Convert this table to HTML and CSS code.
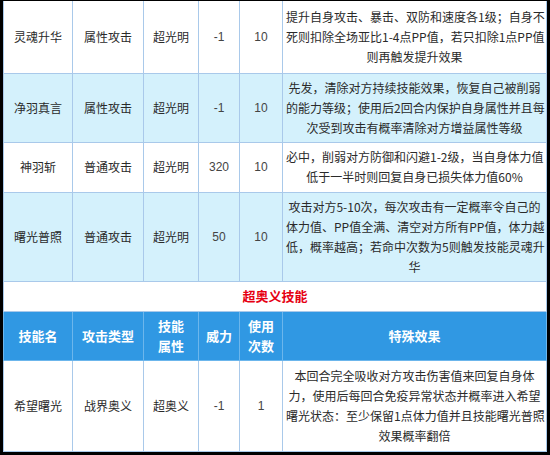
FILE: index.html
```html
<!DOCTYPE html>
<html lang="zh">
<head>
<meta charset="utf-8">
<link rel="stylesheet" href="styles.css">
</head>
<body>
<div class="frame">
<table class="skills">
  <colgroup>
    <col class="c1"><col class="c2"><col class="c3"><col class="c4"><col class="c5"><col class="c6">
  </colgroup>
  <tr class="r1">
    <td>灵魂升华</td><td>属性攻击</td><td>超光明</td><td class="num">-1</td><td class="num">10</td>
    <td class="eff">提升自身攻击、暴击、双防和速度各1级；自身不<br>死则扣除全场亚比1-4点PP值，若只扣除1点PP值<br>则再触发提升效果</td>
  </tr>
  <tr class="r2 alt">
    <td>净羽真言</td><td>属性攻击</td><td>超光明</td><td class="num">-1</td><td class="num">10</td>
    <td class="eff">先发，清除对方持续技能效果，恢复自己被削弱<br>的能力等级；使用后2回合内保护自身属性并且每<br>次受到攻击有概率清除对方增益属性等级</td>
  </tr>
  <tr class="r3">
    <td>神羽斩</td><td>普通攻击</td><td>超光明</td><td class="num">320</td><td class="num">10</td>
    <td class="eff">必中，削弱对方防御和闪避1-2级，当自身体力值<br>低于一半时则回复自身已损失体力值60%</td>
  </tr>
  <tr class="r4 alt">
    <td>曙光普照</td><td>普通攻击</td><td>超光明</td><td class="num">50</td><td class="num">10</td>
    <td class="eff">攻击对方5-10次，每次攻击有一定概率令自己的<br>体力值、PP值全满、清空对方所有PP值，体力越<br>低，概率越高；若命中次数为5则触发技能灵魂升<br>华</td>
  </tr>
  <tr class="r5">
    <td colspan="6" class="section">超奥义技能</td>
  </tr>
  <tr class="head">
    <th>技能名</th><th>攻击类型</th><th>技能<br>属性</th><th>威力</th><th>使用<br>次数</th><th>特殊效果</th>
  </tr>
  <tr class="r7">
    <td>希望曙光</td><td>战界奥义</td><td>超奥义</td><td class="num">-1</td><td class="num">1</td>
    <td class="eff">本回合完全吸收对方攻击伤害值来回复自身体<br>力，使用后每回合免疫异常状态并概率进入希望<br>曙光状态：至少保留1点体力值并且技能曙光普照<br>效果概率翻倍</td>
  </tr>
</table>
</div>
</body>
</html>
```

FILE: styles.css
```css
html, body {
  margin: 0;
  padding: 0;
  background: #000;
}
.frame {
  width: 550px;
  height: 455px;
  box-sizing: border-box;
  padding: 1px 4px 3px 3px;
  background: #000;
  overflow: hidden;
}
.skills {
  width: 543px;
  border-collapse: collapse;
  table-layout: fixed;
  background: #fff;
  font-family: "Noto Sans CJK SC", "Liberation Sans", sans-serif;
  font-size: 12px;
  color: #2a2a2a;
}
.c1 { width: 69px; }
.c2 { width: 71px; }
.c3 { width: 55px; }
.c4 { width: 41px; }
.c5 { width: 43px; }
.c6 { width: 264px; }
.skills td, .skills th {
  border: 1px solid #a9c9ea;
  text-align: center;
  vertical-align: middle;
  padding: 0 2px;
  line-height: 20px;
  white-space: nowrap;
}
.skills tr.r1 td { border-top: 0; }
.skills td.num {
  font-family: "Liberation Sans", Arial, sans-serif;
  color: #444;
}
.skills td.eff {
  padding: 0 3px;
}
.alt td {
  background: #d4f1fc;
}
.r1 { height: 72px; }
.r2 { height: 69px; }
.r3 { height: 50px; }
.r4 { height: 89px; }
.r5 { height: 30px; }
.head { height: 49px; }
.r7 { height: 91px; }
.skills td.section {
  color: #e60012;
  font-weight: bold;
  font-size: 13px;
}
.head th {
  background: #3098e3;
  color: #fff;
  font-weight: bold;
  font-size: 13px;
  border-color: #6cb6ec;
  border-top-color: #3098e3;
  line-height: 20px;
}
```
